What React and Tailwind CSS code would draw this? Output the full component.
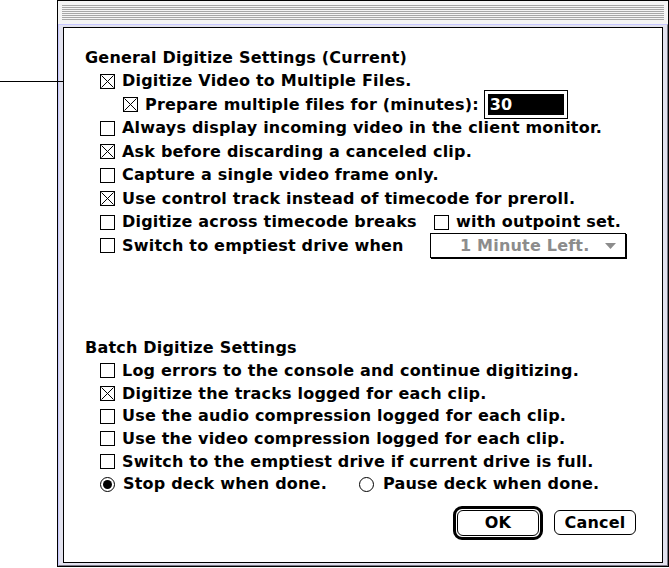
import React from "react";

function CheckBox({ checked }) {
  return (
    <span className="relative block w-[15px] h-[15px] border border-black bg-white shrink-0">
      {checked && (
        <svg className="absolute left-0 top-0" width="13" height="13" viewBox="0 0 13 13">
          <path d="M0.5 0.5L12.5 12.5M12.5 0.5L0.5 12.5" stroke="black" strokeWidth="1" fill="none" />
        </svg>
      )}
    </span>
  );
}

function Radio({ on }) {
  return (
    <span className="flex items-center justify-center w-[15px] h-[15px] rounded-full border border-black bg-white shrink-0">
      {on && <span className="block w-[9px] h-[9px] rounded-full bg-black" />}
    </span>
  );
}

function Option({ checked, label, className = "" }) {
  return (
    <div className={`flex items-center gap-[7px] ${className}`}>
      <CheckBox checked={checked} />
      <span className="whitespace-nowrap">{label}</span>
    </div>
  );
}

const batchOptions = [
  { label: "Log errors to the console and continue digitizing.", checked: false },
  { label: "Digitize the tracks logged for each clip.", checked: true },
  { label: "Use the audio compression logged for each clip.", checked: false },
  { label: "Use the video compression logged for each clip.", checked: false },
  { label: "Switch to the emptiest drive if current drive is full.", checked: false },
];

export default function App() {
  return (
    <div className="relative w-[669px] h-[568px] bg-white text-black font-['DejaVu_Sans',sans-serif] font-bold text-[16px] tracking-[0.2px] leading-none overflow-hidden">
      {/* callout bracket on the left */}
      <svg className="absolute left-0 top-0" width="110" height="120">
        <path d="M0 81.5H90.5M97 68.5H90.5V110.5H100" stroke="black" strokeWidth="1" fill="none" />
      </svg>

      <div className="ml-[57px] w-[612px] h-[567px] border border-black flex flex-col">
        {/* title bar */}
        <div className="h-[23px] bg-[#f4f4f4] px-[4px] pt-[4px]">
          <div className="h-[15px] bg-[repeating-linear-gradient(to_bottom,#a6a6a6_0px,#a6a6a6_1px,#f4f4f4_1px,#f4f4f4_2px)]" />
        </div>

        {/* frame */}
        <div className="flex-1 flex flex-col bg-[#e2e2ee] border border-t-[#c8c8ff] border-l-[#c8c8ff] border-r-[#7a7a88] border-b-[#7a7a88] px-[4px] py-[2px]">
          <div className="relative flex-1 border border-black bg-white pt-[18px] pl-[21px]">
            <div className="h-[23.5px] flex items-center">General Digitize Settings (Current)</div>

            <div className="pl-[15px]">
              <Option checked label="Digitize Video to Multiple Files." className="h-[23.5px]" />
              <div className="h-[23.5px] flex items-center pl-[23px]">
                <Option checked label="Prepare multiple files for (minutes):" />
                <div className="ml-[5px] w-[84px] h-[29px] border border-black p-[3px]">
                  <div className="h-full bg-black text-white flex items-center pl-[2px]">30</div>
                </div>
              </div>
              <Option label="Always display incoming video in the client monitor." className="h-[23.5px]" />
              <Option checked label="Ask before discarding a canceled clip." className="h-[23.5px]" />
              <Option label="Capture a single video frame only." className="h-[23.5px]" />
              <Option checked label="Use control track instead of timecode for preroll." className="h-[23.5px]" />
              <div className="h-[23.5px] flex items-center">
                <Option label="Digitize across timecode breaks" className="w-[334px]" />
                <Option label="with outpoint set." />
              </div>
              <div className="h-[23.5px] flex items-center">
                <Option label="Switch to emptiest drive when" className="w-[330px]" />
                <div className="relative w-[196px] h-[25px] border border-black bg-white shadow-[1px_1px_0_#000] flex items-center pl-[29px] text-[#8c8c8c]">
                  <span>1 Minute Left.</span>
                  <svg className="absolute right-[9px] top-[9px]" width="11" height="6" viewBox="0 0 11 6">
                    <path d="M0 0H11L5.5 6Z" fill="#8c8c8c" />
                  </svg>
                </div>
              </div>
            </div>

            <div className="mt-[79px] h-[23px] flex items-center">Batch Digitize Settings</div>
            <div className="pl-[15px]">
              {batchOptions.map((o) => (
                <Option key={o.label} checked={o.checked} label={o.label} className="h-[22.7px]" />
              ))}
              <div className="h-[22.7px] flex items-center">
                <div className="w-[259px] flex items-center gap-[8px]">
                  <Radio on />
                  <span className="whitespace-nowrap">Stop deck when done.</span>
                </div>
                <div className="flex items-center gap-[9px]">
                  <Radio />
                  <span className="whitespace-nowrap">Pause deck when done.</span>
                </div>
              </div>
            </div>

            {/* buttons */}
            <div className="flex items-center justify-end gap-[11px] pr-[26px] mt-[10px]">
              <div className="w-[90px] h-[34px] rounded-[9px] border-[3px] border-black p-[1px]">
                <div className="h-full rounded-[6px] border border-black flex items-center justify-center">OK</div>
              </div>
              <div className="w-[82px] h-[25px] rounded-[6px] border border-black flex items-center justify-center">Cancel</div>
            </div>
          </div>
        </div>
      </div>
    </div>
  );
}
